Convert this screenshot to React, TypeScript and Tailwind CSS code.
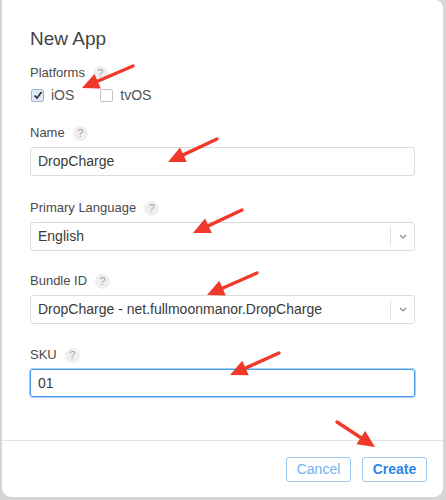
import React from 'react';

const font = { fontFamily: '"Liberation Sans", Arial, sans-serif' };

function Help() {
  return (
    <span className="ml-[8px] inline-flex h-[15px] w-[15px] items-center justify-center rounded-full bg-[#efefef] text-[11px] leading-none text-[#a3a3a3]">
      ?
    </span>
  );
}

function Label({ children }: { children: React.ReactNode }) {
  return (
    <div className="flex h-[16px] items-center text-[13px] text-[#4a4a4a]">
      {children}
      <Help />
    </div>
  );
}

function Select({ value }: { value: string }) {
  return (
    <div className="mt-[6px] flex h-[29px] items-center rounded-[3px] border border-[#dcdcdc] bg-white">
      <span className="flex-1 pl-[7px] text-[14px] text-[#3a3a3a]">{value}</span>
      <span className="h-[19px] w-px bg-[#e2e2e2]" />
      <span className="flex w-[23px] items-center justify-center">
        <svg width="8" height="5" viewBox="0 0 8 5">
          <path d="M1 1l3 3 3-3" fill="none" stroke="#888" strokeWidth="1.2" />
        </svg>
      </span>
    </div>
  );
}

type Arrow = [number, number, number, number];

const arrows: Arrow[] = [
  [133, 66, 82, 88],
  [217, 139, 168, 162],
  [242, 210, 193, 233],
  [257, 273, 207, 295],
  [279, 353, 230, 375],
  [337, 422, 375, 447],
];

function RedArrow({ a }: { a: Arrow }) {
  const [x1, y1, x2, y2] = a;
  const dx = x2 - x1;
  const dy = y2 - y1;
  const len = Math.hypot(dx, dy);
  const ux = dx / len;
  const uy = dy / len;
  const hl = 17;
  const hw = 8;
  const bx = x2 - ux * hl;
  const by = y2 - uy * hl;
  const pts = `${x2},${y2} ${bx - uy * hw},${by + ux * hw} ${bx + uy * hw},${by - ux * hw}`;
  return (
    <g>
      <line x1={x1} y1={y1} x2={bx + ux * 2} y2={by + uy * 2} stroke="#f1392b" strokeWidth="3.4" strokeLinecap="round" />
      <polygon points={pts} fill="#f1392b" />
    </g>
  );
}

export default function App() {
  return (
    <div className="relative h-[500px] w-[446px] bg-[#d6d6d6] pl-[2px]" style={font}>
      <div className="flex h-[497px] w-[441px] flex-col rounded-tr-[8px] rounded-b-[9px] bg-white">
        <div className="flex-1 px-[28px] pt-[27px]">
          <h1 className="h-[24px] text-[19px] leading-[24px] text-[#444]">New App</h1>

          <div className="mt-[14px]">
            <Label>Platforms</Label>
            <div className="mt-[6px] flex h-[16px] items-center text-[14px] text-[#555]">
              <span className="ml-px flex h-[13px] w-[13px] items-center justify-center rounded-[2px] border border-[#a9b3c0] bg-[#dde9f8]">
                <svg width="10" height="9" viewBox="0 0 10 9">
                  <path d="M1.5 4.5l2.5 2.5 4.5-6" fill="none" stroke="#2b2b2b" strokeWidth="1.6" />
                </svg>
              </span>
              <span className="ml-[7px]">iOS</span>
              <span className="ml-[26px] h-[13px] w-[13px] rounded-[2px] border border-[#c4c4c4] bg-white" />
              <span className="ml-[7px]">tvOS</span>
            </div>
          </div>

          <div className="mt-[22px]">
            <Label>Name</Label>
            <div className="mt-[6px] flex h-[29px] items-center rounded-[3px] border border-[#dcdcdc] pl-[7px] text-[14px] text-[#3a3a3a]">
              DropCharge
            </div>
          </div>

          <div className="mt-[24px]">
            <Label>Primary Language</Label>
            <Select value="English" />
          </div>

          <div className="mt-[22px]">
            <Label>Bundle ID</Label>
            <Select value="DropCharge - net.fullmoonmanor.DropCharge" />
          </div>

          <div className="mt-[23px]">
            <Label>SKU</Label>
            <div className="mt-[6px] flex h-[28px] items-center rounded-[3px] border border-[#4a9cf0] pl-[7px] text-[14px] text-[#3a3a3a] shadow-[0_0_0_1px_#a9d0f8]">
              01
            </div>
          </div>
        </div>

        <div className="flex h-[57px] items-center justify-end gap-[11px] border-t border-[#e4e4e4] pr-[16px]">
          <button className="h-[25px] w-[65px] rounded-[3px] border border-[#9cc8f4] text-[14px] text-[#72b2f0]">
            Cancel
          </button>
          <button className="h-[25px] w-[65px] rounded-[3px] border border-[#9cc8f4] text-[14px] font-bold text-[#2d86e6]">
            Create
          </button>
        </div>
      </div>

      <svg className="pointer-events-none absolute left-0 top-0" width="446" height="500">
        {arrows.map((a, i) => (
          <RedArrow key={i} a={a} />
        ))}
      </svg>
    </div>
  );
}
